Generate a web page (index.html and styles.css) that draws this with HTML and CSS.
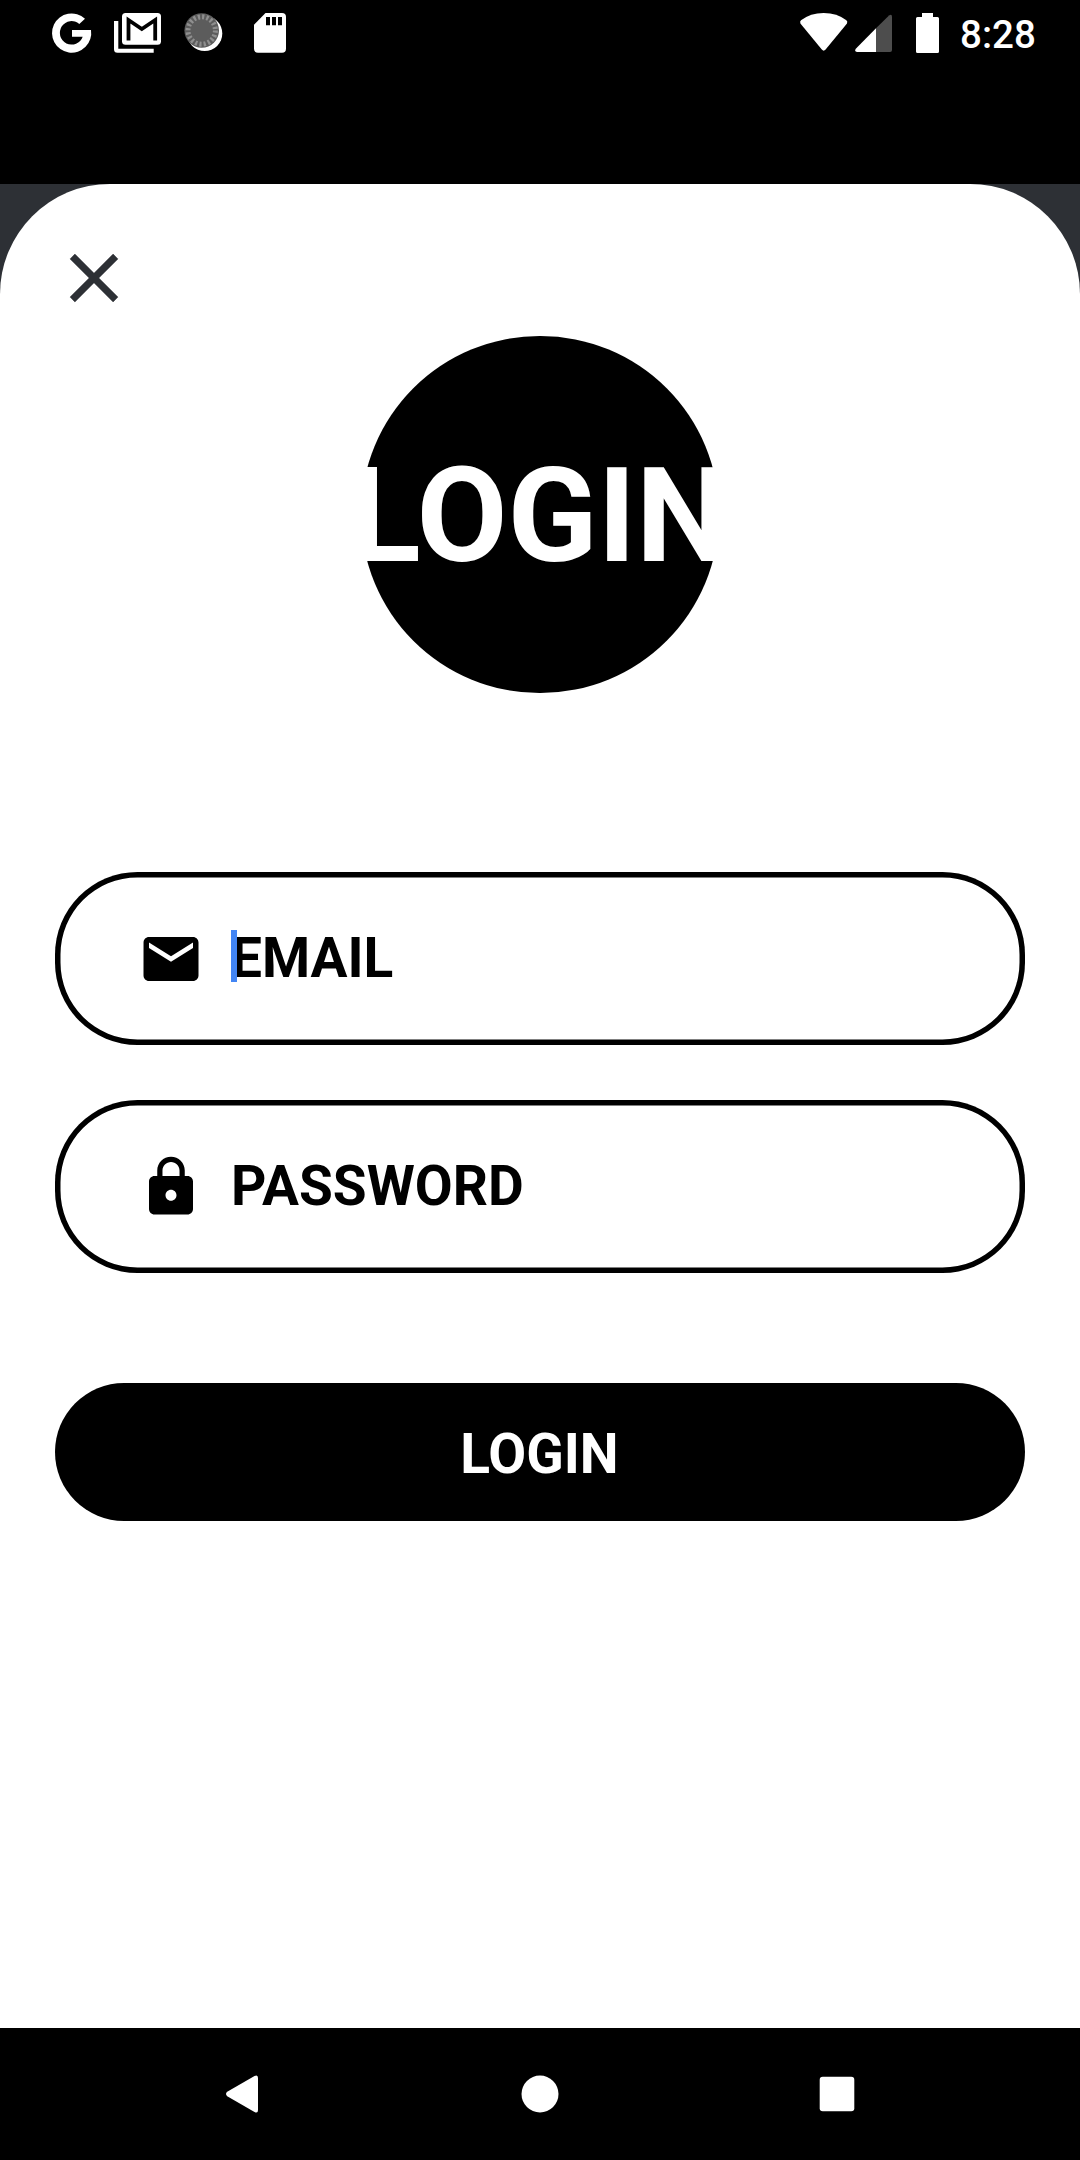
FILE: index.html
```html
<!DOCTYPE html>
<html lang="en">
<head>
<meta charset="utf-8">
<title>Login</title>
<link rel="stylesheet" href="styles.css">
</head>
<body>
<div class="screen">
  <header class="status">
    <div class="status-left">
      <svg width="40" height="40" viewBox="0 0 40 40"><path d="M33 5.700 A19.600 19.600 0 1 0 39 17 H20 V23.700 H30.700 A11.750 11.750 0 1 1 27.300 11 Z" fill="#fff"/></svg>
      <svg width="48" height="40" viewBox="0 0 48 40"><path d="M0 8 H4.300 V35.700 H39.700 V39.700 H3.500 Q0 39.700 0 36.200 Z" fill="#fff"/><rect x="8" y="0" width="39" height="31.700" rx="3.500" fill="#fff"/><path d="M14.500 27.500 V7 L27.800 16 L41.200 7 V27.500" fill="none" stroke="#000" stroke-width="3.800"/></svg>
      <svg width="40" height="40" viewBox="0 0 40 40"><circle cx="19.700" cy="20.500" r="17.600" fill="#fff"/><circle cx="16.700" cy="17.500" r="17.300" fill="#5c5c5c"/><circle cx="16.700" cy="17.500" r="13.700" fill="none" stroke="#8f8f8f" stroke-width="5" stroke-dasharray="2.200 2.104"/></svg>
      <svg width="32" height="40" viewBox="0 0 32 40"><path d="M11.500 0 H28 Q32 0 32 4 V35.700 Q32 39.700 28 39.700 H4 Q0 39.700 0 35.700 V11.800 Z" fill="#fff"/><path d="M12 4h4v8.300h-4zM18 4h4v8.300h-4zM24 4h4v8.300h-4z" fill="#000"/></svg>
    </div>
    <div class="status-right">
      <svg width="48" height="40" viewBox="0 0 48 40"><path d="M1 7.300 Q10.500 0 23.700 0 Q37 0 46.400 7.300 Q48 8.800 46.800 10.700 L25.600 36.600 Q23.700 38.800 21.800 36.600 L.6 10.700 Q-.6 8.800 1 7.300Z" fill="#fff"/></svg>
      <svg width="37" height="40" viewBox="0 0 37 40"><path d="M34 2.500 Q37 .5 37 4 V37 Q37 39 35 39 H21 V15.300Z" fill="#4d4d4d"/><path d="M21 15.300 V39 H2 Q-1 38.500 .8 35.800Z" fill="#fff"/></svg>
      <svg class="battery" width="23" height="40" viewBox="0 0 23 40"><path d="M6 0h11v4h4.500Q23 4 23 5.500V38.500Q23 40 21.500 40H1.500Q0 40 0 38.500V5.500Q0 4 1.500 4H6z" fill="#fff"/></svg>
      <span class="clock">8:28</span>
    </div>
  </header>
  <div class="backdrop">
    <main class="sheet">
      <svg class="close" viewBox="0 0 24 24"><path d="M19 6.410L17.590 5 12 10.590 6.410 5 5 6.410 10.590 12 5 17.590 6.410 19 12 13.410 17.590 19 19 17.590 13.410 12z" fill="#2d3035"/></svg>
      <div class="logo"><span>LOGIN</span></div>
      <div class="field">
        <svg class="icon" viewBox="0 0 24 24"><path d="M20 4H4c-1.100 0-1.990.9-1.990 2L2 18c0 1.100.9 2 2 2h16c1.100 0 2-.9 2-2V6c0-1.100-.9-2-2-2zm0 4l-8 5-8-5V6l8 5 8-5v2z"/></svg>
        <span class="label">EMAIL<i class="caret"></i></span>
      </div>
      <div class="field">
        <svg class="icon" viewBox="0 0 24 24"><path d="M18 8h-1V6c0-2.760-2.240-5-5-5S7 3.240 7 6v2H6c-1.100 0-2 .9-2 2v10c0 1.100.9 2 2 2h12c1.100 0 2-.9 2-2V10c0-1.100-.9-2-2-2zm-6 9c-1.100 0-2-.9-2-2s.9-2 2-2 2 .9 2 2-.9 2-2 2zm3.100-9H8.900V6c0-1.710 1.390-3.100 3.100-3.100s3.100 1.390 3.100 3.100v2z"/></svg>
        <span class="label">PASSWORD</span>
      </div>
      <button class="submit">LOGIN</button>
    </main>
  </div>
  <nav class="navbar">
    <svg width="34" height="40" viewBox="0 0 34 40"><path d="M29.500 2 Q33 .2 33 4 V36 Q33 39.800 29.500 38 L2.200 22.200 Q-.2 20 2.200 17.800Z" fill="#fff"/></svg>
    <svg width="38" height="38" viewBox="0 0 38 38"><circle cx="20" cy="19" r="18.500" fill="#fff"/></svg>
    <svg width="36" height="36" viewBox="0 0 36 36"><rect x=".7" y=".7" width="34.600" height="34.600" rx="3" fill="#fff"/></svg>
  </nav>
</div>
</body>
</html>
```
FILE: styles.css
```css
* { box-sizing: border-box; }
body { margin: 0; background: #000; font-family: Roboto, sans-serif; }
svg { display: block; flex: none; overflow: visible; }
.screen { width: 1080px; height: 2160px; display: flex; flex-direction: column; overflow: hidden; }
.status { height: 184px; padding: 13px 44px 0 52px; display: flex; justify-content: space-between; align-items: flex-start; background: #000; }
.status-left { display: flex; }
.status-left svg:nth-child(2) { margin-left: 22px; }
.status-left svg:nth-child(3) { margin-left: 22.500px; }
.status-left svg:nth-child(4) { margin-left: 29.500px; }
.status-right { display: flex; }
.status-right svg:nth-child(2) { margin-left: 7px; }
.battery { margin-left: 24px; }
.clock { width: 76px; margin-left: 21px; color: #fff; font-size: 38.500px; font-weight: 500; line-height: 44px; white-space: nowrap; }
.backdrop { height: 1844px; background: #2d3035; }
.sheet { height: 100%; padding: 0 55px; background: #fff; border-radius: 110px 110px 0 0; display: flex; flex-direction: column; }
.close { width: 82px; height: 82px; margin: 52.500px 0 0 -2.500px; }
.close path { stroke: #2d3035; stroke-width: .15; }
.logo { width: 357.500px; height: 357.500px; margin: 17px auto 0; padding: 4px 1.500px 0 0; border-radius: 50%; background: #000; color: #fff; font-size: 132px; font-weight: 700; display: flex; align-items: center; justify-content: center; }
.field { height: 173px; margin-top: 55px; padding-left: 82.500px; border-radius: 82.500px; box-shadow: inset 0 0 0 5.500px #000; display: flex; align-items: center; }
.logo + .field { margin-top: 179px; }
.icon { width: 66px; height: 66px; }
.label { position: relative; margin: 0 0 2px 27.500px; font-size: 55px; font-weight: 700; line-height: 64px; }
.caret { position: absolute; left: 0; top: 4px; width: 5.500px; height: 52px; background: #4285f4; }
.submit { height: 137.500px; margin-top: 110.300px; padding: 3px 1px 0 0; border: 0; border-radius: 69px; background: #000; color: #fff; font: 700 55px/64px Roboto, sans-serif; }
.navbar { height: 132px; background: #000; display: flex; align-items: center; justify-content: space-between; padding: 0 225px; }
```
